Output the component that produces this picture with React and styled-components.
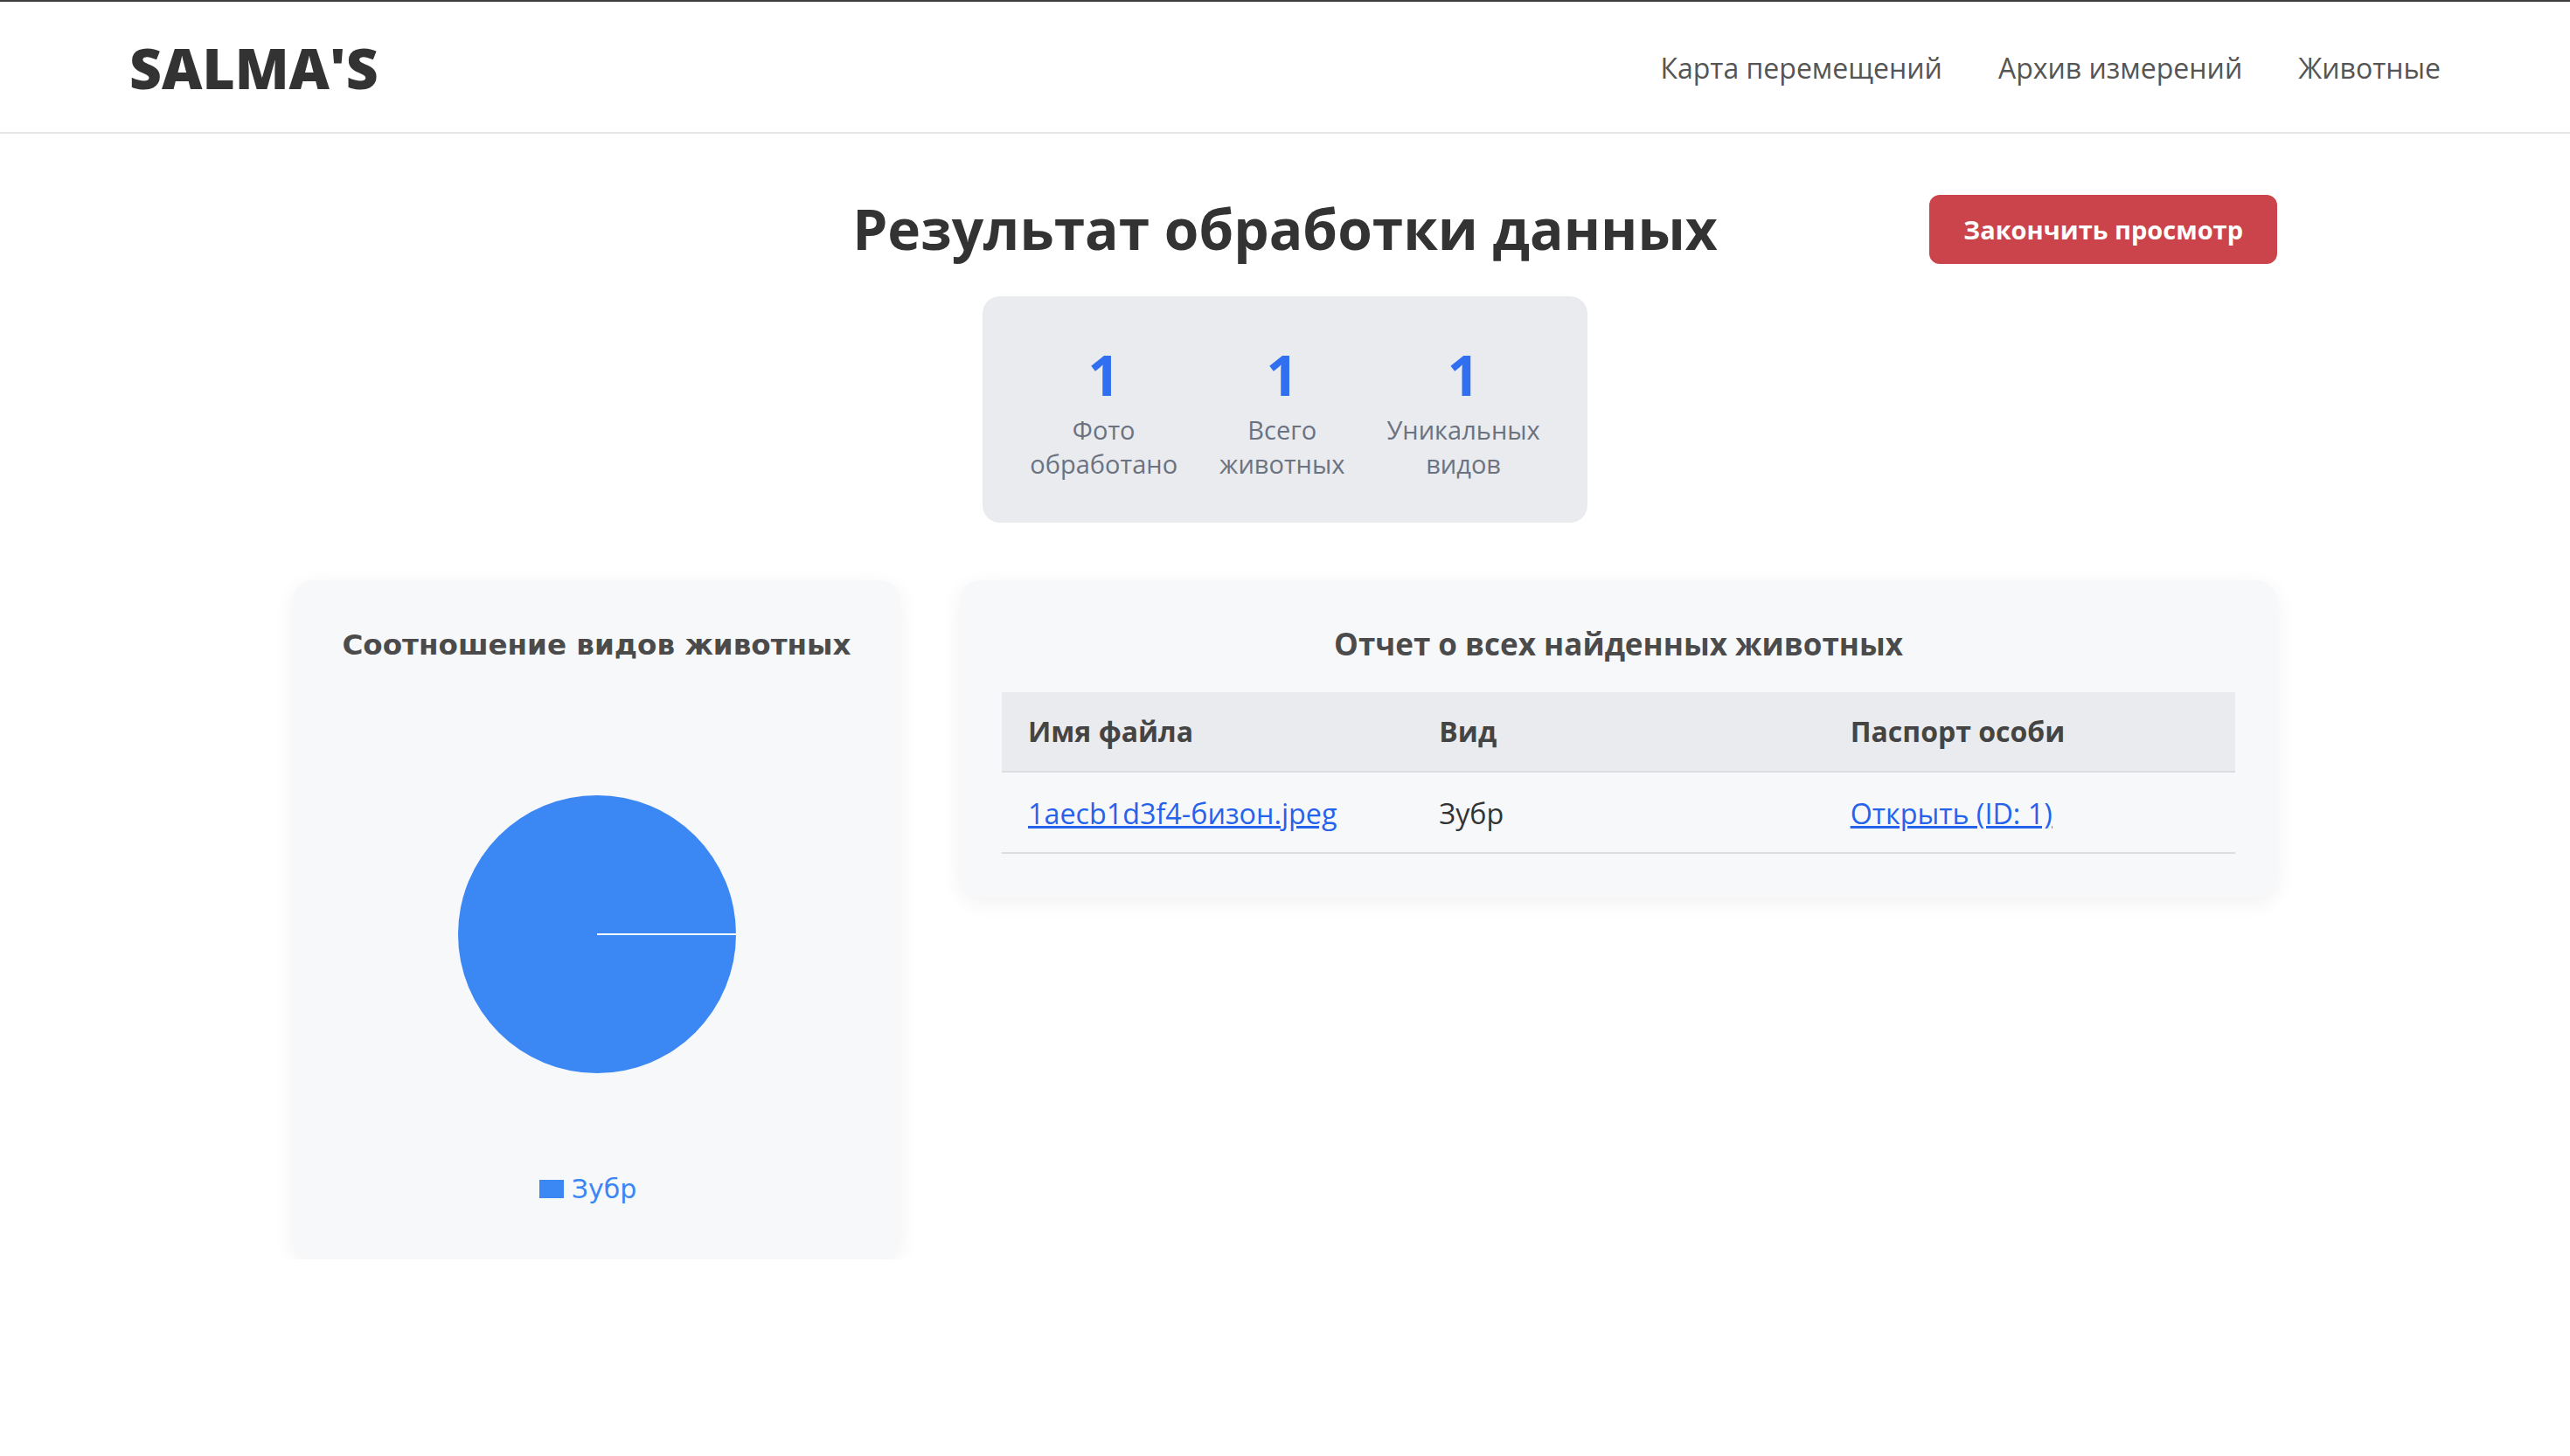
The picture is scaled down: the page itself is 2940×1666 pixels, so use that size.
import React from "react";
import styled, { createGlobalStyle } from "styled-components";

const Global = createGlobalStyle`
  html, body { margin: 0; padding: 0; background: #ffffff; }
  body {
    font-family: "Open Sans", "Noto Sans", sans-serif;
    color: #333333;
    border-top: 2px solid #3d3d3d;
  }
  * { box-sizing: border-box; }
`;

const Header = styled.header`
  height: 151px;
  border-bottom: 2px solid #e6e6e6;
  display: flex;
  align-items: center;
  justify-content: space-between;
  padding: 2px 148px 0;
`;

const Logo = styled.div`
  font-size: 64px;
  font-weight: 800;
  color: #333333;
  line-height: 1;
`;

const Nav = styled.nav`
  display: flex;
  gap: 64px;
`;

const NavLink = styled.a`
  font-size: 32px;
  color: #555555;
  text-decoration: none;
`;

const Main = styled.main`
  width: 2270px;
  margin: 0 auto;
  padding-top: 70px;
  display: flex;
  flex-direction: column;
  align-items: center;
`;

const TitleRow = styled.div`
  width: 100%;
  display: grid;
  grid-template-columns: 1fr auto 1fr;
  align-items: center;
`;

const Title = styled.h1`
  grid-column: 2;
  margin: 0;
  font-size: 64px;
  font-weight: 700;
  line-height: 1.2;
  color: #333333;
`;

const EndButton = styled.button`
  grid-column: 3;
  justify-self: end;
  height: 79px;
  padding: 0 39px;
  border: none;
  border-radius: 12px;
  background: #cc444b;
  color: #ffffff;
  font-family: inherit;
  font-size: 29px;
  font-weight: 700;
`;

const StatsBox = styled.div`
  margin-top: 37px;
  display: flex;
  gap: 48px;
  padding: 52px 54px 48px;
  background: #e9ebef;
  border-radius: 20px;
`;

const Stat = styled.div`
  display: flex;
  flex-direction: column;
  align-items: center;
  text-align: center;
`;

const StatNumber = styled.div`
  font-size: 64px;
  font-weight: 700;
  line-height: 1.2;
  color: #2f6ff0;
  margin-bottom: 4px;
`;

const StatLabel = styled.div`
  font-size: 29px;
  line-height: 39px;
  color: #6b7280;
`;

const Cards = styled.div`
  margin-top: 66px;
  width: 100%;
  display: grid;
  grid-template-columns: 695px 1fr;
  gap: 68px;
  align-items: start;
`;

const Card = styled.section`
  background: #f7f8fa;
  border-radius: 24px;
  box-shadow: 0 6px 24px rgba(0, 0, 0, 0.06);
`;

const ChartCard = styled(Card)`
  height: 777px;
  padding-top: 55px;
  display: flex;
  flex-direction: column;
  align-items: center;
`;

const ChartTitle = styled.h2`
  margin: 0;
  font-family: "DejaVu Sans", sans-serif;
  font-size: 32.6px;
  font-weight: 700;
  line-height: 38px;
  color: #4b4b4b;
`;

const PieWrap = styled.div`
  margin-top: 152px;
  width: 320px;
  height: 320px;
`;

const Legend = styled.div`
  margin-top: 114px;
  margin-right: 20px;
  display: flex;
  align-items: center;
  gap: 9px;
  font-family: "DejaVu Sans", sans-serif;
  font-size: 30px;
  color: #3b86f5;
`;

const LegendSwatch = styled.span`
  width: 28px;
  height: 21px;
  background: ${(p) => p.$color};
`;

const TableCard = styled(Card)`
  padding: 48px 48px 50px;
`;

const TableTitle = styled.h2`
  margin: 0 0 30px;
  text-align: center;
  font-size: 35px;
  font-weight: 700;
  line-height: 50px;
  color: #4b4b4b;
`;

const Table = styled.table`
  width: 100%;
  border-collapse: collapse;
  table-layout: fixed;
`;

const Th = styled.th`
  background: #eaebee;
  text-align: left;
  padding: 21px 30px;
  font-size: 32px;
  font-weight: 700;
  line-height: 48px;
  color: #444444;
  border-bottom: 2px solid #dcdde0;
`;

const Td = styled.td`
  padding: 22px 30px 21px;
  font-size: 32.3px;
  line-height: 48px;
  color: #333333;
  border-bottom: 2px solid #dcdde0;
`;

const Link = styled.a`
  color: #2563eb;
  text-decoration: underline;
`;

function Pie() {
  return (
    <svg width="320" height="320" viewBox="0 0 320 320">
      <circle cx="160" cy="160" r="159" fill="#3b88f5" />
      <line x1="160" y1="160" x2="319" y2="160" stroke="#ffffff" strokeWidth="2" />
    </svg>
  );
}

export default function App() {
  return (
    <>
      <Global />
      <Header>
        <Logo>SALMA'S</Logo>
        <Nav>
          <NavLink href="#">Карта перемещений</NavLink>
          <NavLink href="#">Архив измерений</NavLink>
          <NavLink href="#">Животные</NavLink>
        </Nav>
      </Header>
      <Main>
        <TitleRow>
          <Title>Результат обработки данных</Title>
          <EndButton>Закончить просмотр</EndButton>
        </TitleRow>
        <StatsBox>
          <Stat>
            <StatNumber>1</StatNumber>
            <StatLabel>Фото<br />обработано</StatLabel>
          </Stat>
          <Stat>
            <StatNumber>1</StatNumber>
            <StatLabel>Всего<br />животных</StatLabel>
          </Stat>
          <Stat>
            <StatNumber>1</StatNumber>
            <StatLabel>Уникальных<br />видов</StatLabel>
          </Stat>
        </StatsBox>
        <Cards>
          <ChartCard>
            <ChartTitle>Соотношение видов животных</ChartTitle>
            <PieWrap>
              <Pie />
            </PieWrap>
            <Legend>
              <LegendSwatch $color="#3b88f5" />
              Зубр
            </Legend>
          </ChartCard>
          <TableCard>
            <TableTitle>Отчет о всех найденных животных</TableTitle>
            <Table>
              <thead>
                <tr>
                  <Th>Имя файла</Th>
                  <Th>Вид</Th>
                  <Th>Паспорт особи</Th>
                </tr>
              </thead>
              <tbody>
                <tr>
                  <Td><Link href="#">1aecb1d3f4-бизон.jpeg</Link></Td>
                  <Td>Зубр</Td>
                  <Td><Link href="#">Открыть (ID: 1)</Link></Td>
                </tr>
              </tbody>
            </Table>
          </TableCard>
        </Cards>
      </Main>
    </>
  );
}
